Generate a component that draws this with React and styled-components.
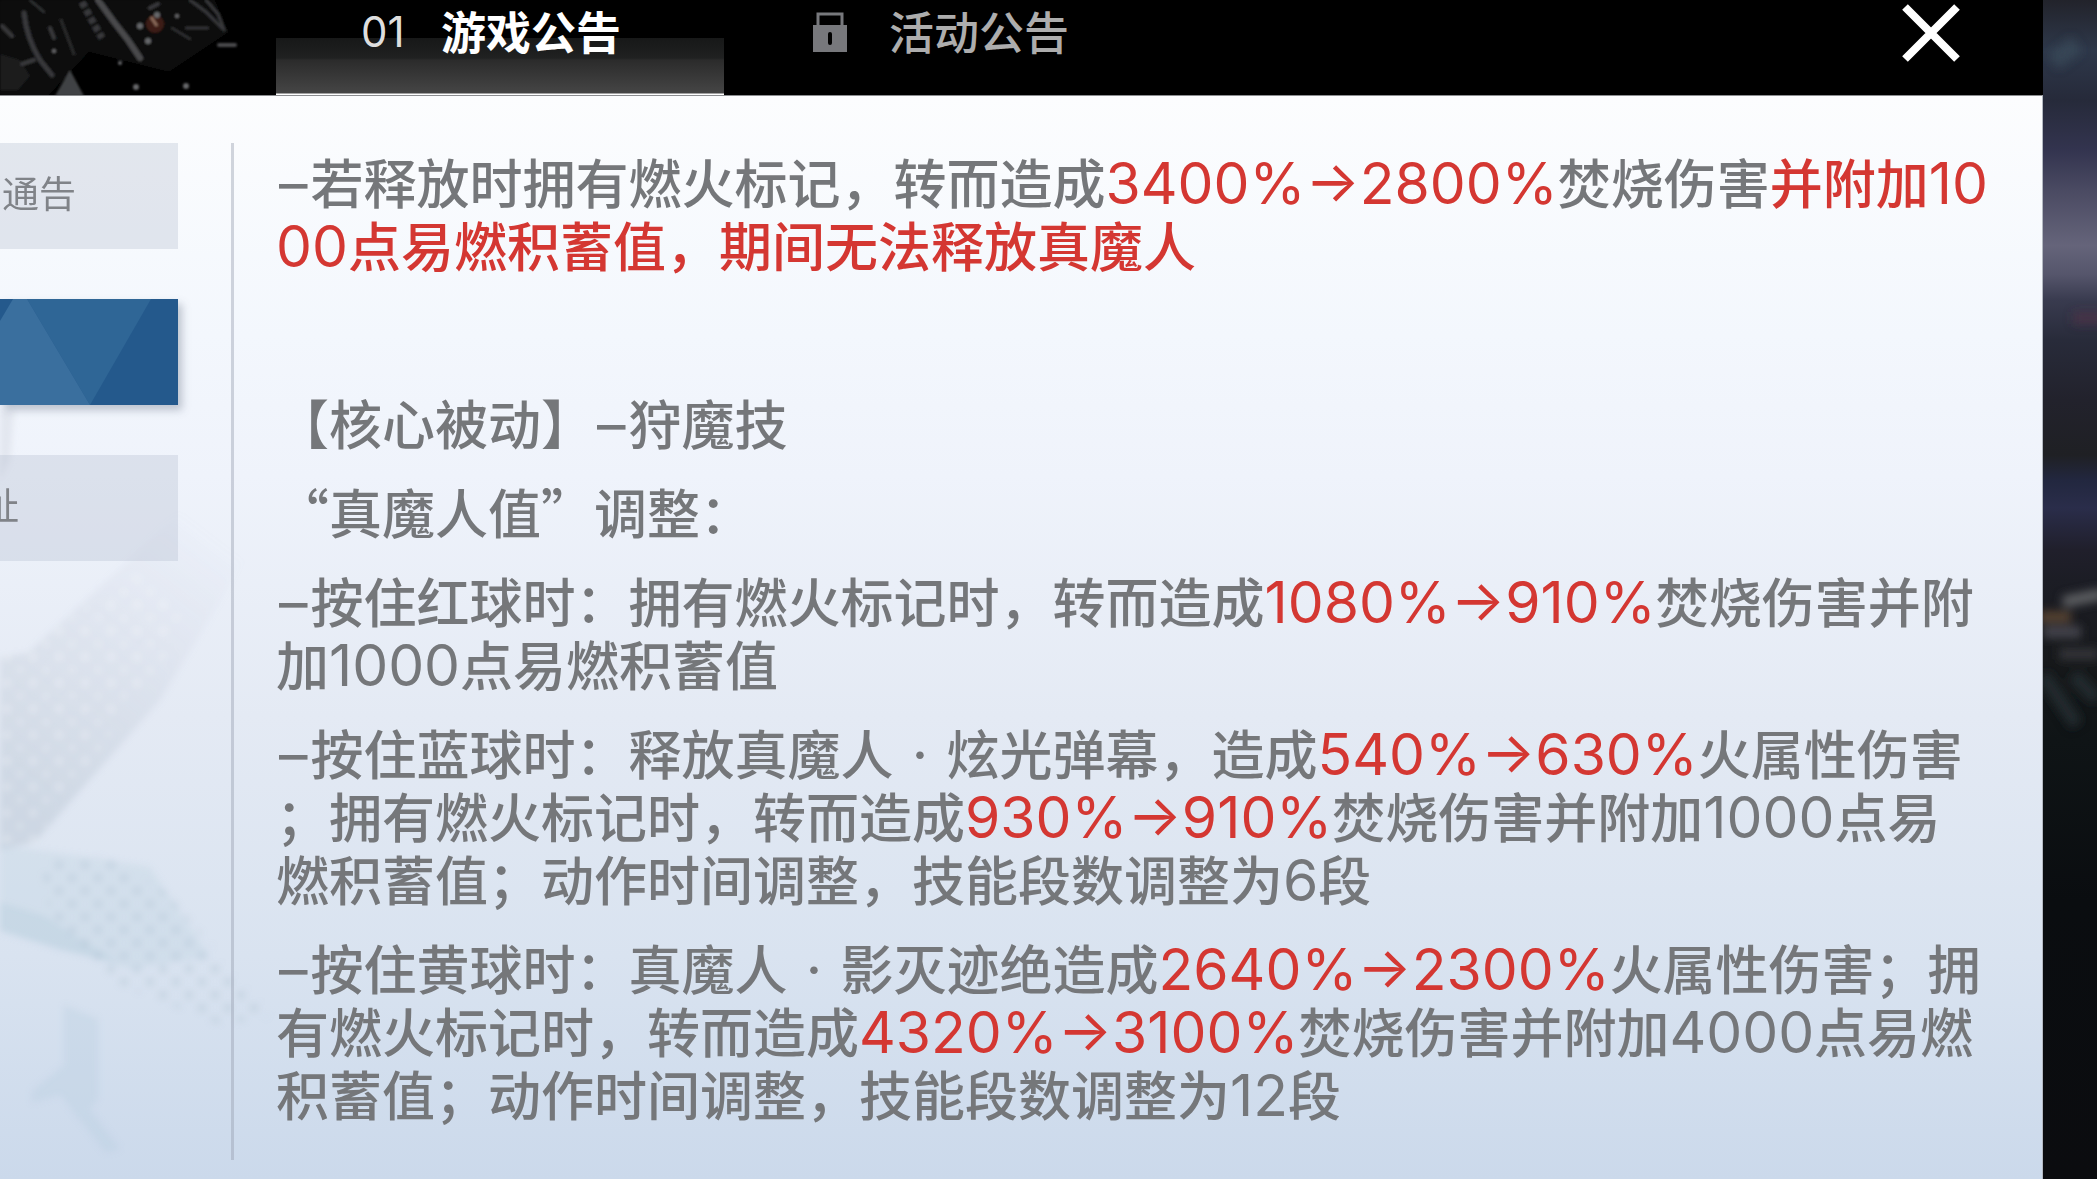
import { Fragment } from 'react';
import styled, { createGlobalStyle, css } from 'styled-components';

const cjkFont = '"Noto Sans CJK SC", "Noto Sans", sans-serif';
const numberFont = 'Inter, "Noto Sans CJK SC", sans-serif';

const GlobalStyle = createGlobalStyle`
    * {
        box-sizing: border-box;
    }

    body {
        margin: 0;
        background: #0b0c0f;
        font-family: ${cjkFont};
        overflow: hidden;
    }
`;

const Screen = styled.div`
    display: grid;
    grid-template-columns: minmax(0, 1fr) 54px;
    min-height: 100vh;
`;

const Dialog = styled.div`
    display: flex;
    flex-direction: column;
`;

const TopBar = styled.header`
    position: relative;
    display: flex;
    align-items: stretch;
    height: 95px;
    padding-left: 276px;
    background: #000;
`;

const Debris = styled.svg`
    position: absolute;
    top: 0;
    left: 0;
`;

const Tabs = styled.nav`
    display: flex;
    flex: 1 1 auto;
`;

const Tab = styled.button`
    display: flex;
    align-items: flex-start;
    width: 448px;
    padding: 0 0 0 85px;
    border: 0;
    background: none;
    color: #adadad;
    font-family: ${cjkFont};
    font-size: 45px;
    font-weight: 500;
    line-height: 62px;

    ${({ $active }) => $active && css`
        background: linear-gradient(#171818 0, #202121 20px, #2b2b2b 22px, #454545 55px, #fff 56px) 0 38px no-repeat;
        color: #fff;
        font-weight: 700;
    `}
`;

const TabMark = styled.span`
    display: flex;
    width: 80px;
    height: 64px;
    align-items: center;
    padding-left: ${({ $icon }) => ($icon ? 4 : 0)}px;
    color: #dedede;
    font-family: ${numberFont};
    font-size: 42px;
    font-weight: 400;
`;

const CloseButton = styled.button`
    width: 58px;
    height: 64px;
    margin-right: 83px;
    padding: 0;
    border: 0;
    background: none;
`;

const Body = styled.main`
    position: relative;
    display: flex;
    flex: 1 1 auto;
    padding: 47px 40px 19px 0;
    background: linear-gradient(#fcfdfe 0, #f3f7fd 240px, #eff3fb 380px, #e4eaf4 620px, #d9e3f0 860px, #cbd9eb 100%);
    border-top: 1px solid #8b8d90;
    border-right: 1px solid #b4b9c2;
`;

const Backdrop = styled.svg`
    position: absolute;
    top: 0;
    left: 0;
`;

const Sidebar = styled.nav`
    position: relative;
    display: flex;
    flex: 0 0 231px;
    flex-direction: column;
    gap: 50px;
    min-width: 0;
    padding-right: 53px;
`;

const SideItem = styled.button`
    display: flex;
    align-items: center;
    justify-content: flex-end;
    height: 106px;
    padding: 0 ${({ $inset }) => $inset || 0}px ${({ $inset }) => ($inset ? 8 : 0)}px 0;
    border: 0;
    background: rgba(176, 186, 205, 0.32);
    color: #808388;
    font-family: ${cjkFont};
    font-size: 37px;
    overflow: hidden;
    white-space: nowrap;

    ${({ $active }) => $active && css`
        background: #24598c;
        box-shadow: 4px 5px 8px rgba(90, 100, 120, 0.35);
    `}
`;

const SideLabel = styled.span`
    flex: none;
`;

const Article = styled.article`
    position: relative;
    display: flex;
    flex: 1 1 0;
    flex-direction: column;
    gap: 26px;
    min-width: 0;
    padding: 7px 0 0 42px;
    border-left: 3px solid rgba(150, 158, 175, 0.42);
    color: #75777a;
    font-size: 53px;
    font-weight: 500;
    line-height: 63px;
    white-space: nowrap;
`;

const Paragraph = styled.p`
    min-height: 63px;
    margin: 0;
`;

const Changed = styled.span`
    color: #d43732;
`;

const Figure = styled.span`
    font-family: ${numberFont};
    font-size: 57px;
    font-weight: 400;
    line-height: 1px;
`;

const Dash = styled(Figure)`
    margin: 0 3px;
`;

const MiddleDot = styled(Figure)`
    display: inline-block;
    width: 53px;
    text-align: center;
`;

const Scene = styled.aside`
    background: linear-gradient(
        #22232b 0, #2e384a 50px, #262a3a 100px, #33344f 150px, #4a4a62 190px, #65647a 245px,
        #55556b 275px, #393b4f 300px, #282b3a 340px, #22222c 400px, #1f2024 455px, #22273f 480px,
        #2a2d4a 508px, #201f2b 550px, #1c1d25 580px, #17191b 660px, #0f1416 740px, #0a0d10 900px, #0b0c0f 100%
    );
`;

// Red spans are wrapped in *...*, every inner array is one paragraph.
const paragraphs = [
    ['–若释放时拥有燃火标记，转而造成*3400%→2800%*焚烧伤害*并附加10*', '*00点易燃积蓄值，期间无法释放真魔人*'],
    [],
    ['【核心被动】–狩魔技'],
    ['“真魔人值”调整：'],
    ['–按住红球时：拥有燃火标记时，转而造成*1080%→910%*焚烧伤害并附', '加1000点易燃积蓄值'],
    [
        '–按住蓝球时：释放真魔人·炫光弹幕，造成*540%→630%*火属性伤害',
        '；拥有燃火标记时，转而造成*930%→910%*焚烧伤害并附加1000点易',
        '燃积蓄值；动作时间调整，技能段数调整为6段',
    ],
    [
        '–按住黄球时：真魔人·影灭迹绝造成*2640%→2300%*火属性伤害；拥',
        '有燃火标记时，转而造成*4320%→3100%*焚烧伤害并附加4000点易燃',
        '积蓄值；动作时间调整，技能段数调整为12段',
    ],
];

const glyphs = { '–': Dash, '·': MiddleDot };

const withFigures = (text) =>
    text.split(/([0-9%→]+|[–·])/).map((part, i) => {
        if (i % 2 === 0) return part;
        const Glyph = glyphs[part] || Figure;
        return <Glyph key={i}>{part}</Glyph>;
    });

const Line = ({ text }) =>
    text.split('*').map((part, i) =>
        i % 2 ? <Changed key={i}>{withFigures(part)}</Changed> : <Fragment key={i}>{withFigures(part)}</Fragment>
    );

const LockIcon = () => (
    <svg width="34" height="40" viewBox="0 0 34 40" aria-hidden="true">
        <path d="M5 14V2h24v12" fill="none" stroke="#77787c" strokeWidth="3" />
        <path d="M0 13h34v27H0z" fill="#77787c" />
        <rect x="15" y="20" width="4" height="13" rx="2" fill="#000" />
    </svg>
);

const DebrisArt = () => (
    <Debris width="276" height="95" viewBox="0 0 276 95" aria-hidden="true">
        <defs>
            <filter id="soft"><feGaussianBlur stdDeviation="1" /></filter>
        </defs>
        <g filter="url(#soft)">
            <path d="M0 0h215l14 32-60 40-80-20-40 43H0z" fill="#080909" />
            <path d="M0 54l20 6 10 16-12 14H0z" fill="#1b1d1f" />
            <g fill="none" stroke="#37393b" strokeLinecap="round">
                <path d="M24 13c2 20 8 34 16 47l12 15" strokeWidth="5" />
                <path d="M30 0l14 12" strokeWidth="2" />
                <path d="M61 20l13 34" strokeWidth="3" opacity=".7" />
                <path d="M82 2l12 22 8 14" strokeWidth="7" strokeDasharray="6 3" strokeLinecap="butt" />
                <path d="M98 0l16 22 14 18 12 18" strokeWidth="6" stroke="#48494c" />
                <path d="M190 0l16 12 16 16M206 0l12 14 6 16" strokeWidth="3" />
                <path d="M172 28l18 11M186 28h22" strokeWidth="2" />
                <path d="M219 45h16" strokeWidth="4" stroke="#4b4c4e" />
                <path d="M2 26l10 10M22 64l12-4M50 28l4 10M150 8l8-4" strokeWidth="4" />
            </g>
            <circle cx="155" cy="24" r="9" fill="#3c1d15" />
            <path d="M151 17l6 9" stroke="#8a6a5a" strokeWidth="3" />
            <g fill="#66686a">
                <circle cx="140" cy="26" r="3" />
                <circle cx="157" cy="15" r="3" />
                <circle cx="177" cy="16" r="2" />
                <circle cx="148" cy="41" r="3" />
                <circle cx="54" cy="51" r="2" />
                <circle cx="120" cy="63" r="2" />
                <circle cx="136" cy="87" r="3" />
                <circle cx="186" cy="86" r="3" />
            </g>
            <path d="M70 70l14 26H55z" fill="#404244" />
        </g>
    </Debris>
);

const BackdropArt = () => (
    <Backdrop width="420" height="1083" viewBox="0 96 420 1083" aria-hidden="true">
        <defs>
            <pattern id="light" width="26" height="26" patternUnits="userSpaceOnUse">
                <circle cx="7" cy="7" r="4" fill="#fff" />
                <circle cx="20" cy="20" r="3" fill="#fff" />
            </pattern>
            <pattern id="dark" width="26" height="26" patternUnits="userSpaceOnUse">
                <circle cx="7" cy="7" r="5" fill="#a9bccd" />
                <circle cx="20" cy="20" r="5" fill="#a9bccd" />
            </pattern>
            <linearGradient id="band" gradientUnits="userSpaceOnUse" x1="220" y1="540" x2="20" y2="800">
                <stop offset="0" stopColor="#c3c9d8" stopOpacity="0" />
                <stop offset="1" stopColor="#bcc8d6" stopOpacity=".5" />
            </linearGradient>
            <filter id="haze"><feGaussianBlur stdDeviation="3" /></filter>
        </defs>
        <g filter="url(#haze)">
            <path d="M0 657l28-4L130 560l50-50 70 40-90 150L35 842 0 850z" fill="url(#band)" />
            <path d="M0 410h14l-4 50-10 20z" fill="#d5d9e3" opacity=".5" />
            <path d="M0 657l28-4L130 570l60 50L35 842 0 850z" fill="url(#light)" opacity=".25" />
            <path d="M0 845l90 12 60 10 60 90-80 12L0 932z" fill="#bccfdf" opacity=".28" />
            <path d="M40 860l70-5 60 40 50 60 60 60-60 10-100-40-70-70z" fill="url(#dark)" opacity=".25" />
            <path d="M0 902l45 14 30 20 45 26-60-12-60-20z" fill="#a5bdd2" opacity=".22" />
            <path d="M64 1005l34 14v80l-8 10 30 40-14 4-46-58-28 8v-12l32-26z" fill="#b3c8dc" opacity=".26" />
        </g>
    </Backdrop>
);

const BlueFacets = () => (
    <svg width="178" height="106" viewBox="0 0 178 106" aria-hidden="true">
        <path d="M27 0h124L90 106z" fill="#2f6696" />
        <path d="M13 0h14l63 106H0V22z" fill="#3a6f9e" />
    </svg>
);

const SceneLights = () => (
    <svg width="54" height="800" viewBox="0 0 54 800" aria-hidden="true">
        <defs>
            <filter id="blur" filterUnits="userSpaceOnUse" x="-20" y="0" width="94" height="800">
                <feGaussianBlur stdDeviation="5" />
            </filter>
        </defs>
        <g filter="url(#blur)" fill="none" strokeWidth="11">
            <path d="M10 62l24-18" stroke="#3d4f5e" strokeWidth="18" opacity=".6" />
            <path d="M30 318h30" stroke="#55304a" strokeWidth="12" opacity=".6" />
            <path d="M20 602l40-8" stroke="#606265" />
            <path d="M-4 617h32" stroke="#5a4530" />
            <path d="M0 632h38" stroke="#44454d" strokeWidth="12" />
            <path d="M16 654h40" stroke="#34363a" />
            <path d="M0 675l34 50M30 675l24 24" stroke="#24292d" strokeWidth="14" />
        </g>
    </svg>
);

export default function App() {
    return (
        <>
            <GlobalStyle />
            <Screen>
                <Dialog>
                    <TopBar>
                        <DebrisArt />
                        <Tabs>
                            <Tab $active><TabMark>01</TabMark>游戏公告</Tab>
                            <Tab><TabMark $icon><LockIcon /></TabMark>活动公告</Tab>
                        </Tabs>
                        <CloseButton aria-label="关闭">
                            <svg width="58" height="64" viewBox="0 0 58 64" aria-hidden="true">
                                <path d="M3 7l52 52M55 7L3 59" stroke="#fff" strokeWidth="8" />
                            </svg>
                        </CloseButton>
                    </TopBar>
                    <Body>
                        <BackdropArt />
                        <Sidebar>
                            <SideItem $inset={102}><SideLabel>通告</SideLabel></SideItem>
                            <SideItem $active aria-current="page"><BlueFacets /></SideItem>
                            <SideItem $inset={159}><SideLabel>址</SideLabel></SideItem>
                        </Sidebar>
                        <Article>
                            {paragraphs.map((lines, i) => (
                                <Paragraph key={i}>
                                    {lines.map((text, j) => (
                                        <Fragment key={j}>
                                            {j > 0 && <br />}
                                            <Line text={text} />
                                        </Fragment>
                                    ))}
                                </Paragraph>
                            ))}
                        </Article>
                    </Body>
                </Dialog>
                <Scene>
                    <SceneLights />
                </Scene>
            </Screen>
        </>
    );
}
